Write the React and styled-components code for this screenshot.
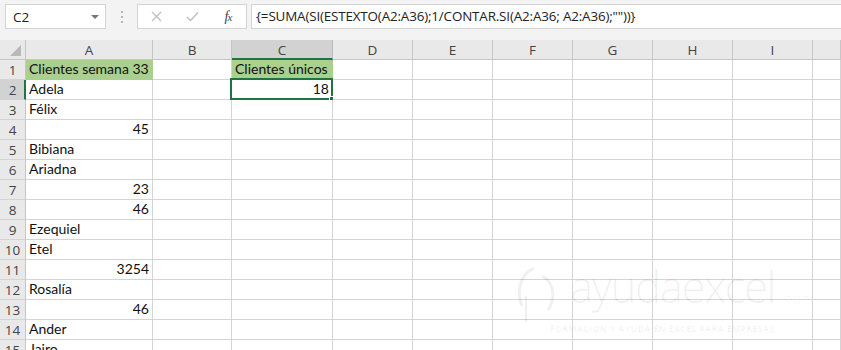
import React from "react";
import styled, { createGlobalStyle } from "styled-components";

const GlobalStyle = createGlobalStyle`
  html, body {
    margin: 0;
    padding: 0;
    background: #ffffff;
    overflow: hidden;
  }
  * {
    box-sizing: border-box;
  }
`;

const Wrapper = styled.div`
  position: relative;
  width: 841px;
  height: 350px;
  overflow: hidden;
  background: #ffffff;
`;

const TopBar = styled.div`
  display: flex;
  align-items: flex-start;
  height: 40px;
  padding: 4px 0 0 5px;
  background: #f3f3f3;
  font-family: "Open Sans", "Noto Sans", sans-serif;
`;

const NameBox = styled.div`
  display: flex;
  align-items: center;
  justify-content: space-between;
  width: 101px;
  height: 25px;
  padding: 0 6px 0 7px;
  background: #ffffff;
  border: 1px solid #d4d4d4;
  font-size: 13.5px;
  color: #222;
`;

const Caret = styled.span`
  width: 0;
  height: 0;
  border-left: 4px solid transparent;
  border-right: 4px solid transparent;
  border-top: 4px solid #777;
`;

const Dots = styled.div`
  display: flex;
  flex-direction: column;
  justify-content: center;
  gap: 3px;
  width: 31px;
  height: 25px;
  padding-left: 15px;
  span {
    width: 2px;
    height: 2px;
    background: #b5b5b5;
  }
`;

const ButtonsBox = styled.div`
  display: flex;
  align-items: center;
  width: 110px;
  height: 25px;
  background: #ffffff;
  border: 1px solid #d4d4d4;
`;

const IconButton = styled.div`
  display: flex;
  align-items: center;
  justify-content: center;
  width: ${(p) => p.$w}px;
  height: 100%;
  color: #bdbdbd;
`;

const Fx = styled.span`
  font-family: "Liberation Serif", serif;
  font-style: italic;
  font-size: 14px;
  color: #444;
  letter-spacing: -1px;
  sub {
    font-size: 11px;
    vertical-align: baseline;
  }
`;

const FormulaBox = styled.div`
  flex: 1;
  height: 25px;
  margin-left: 4px;
  padding: 2px 0 0 4px;
  background: #ffffff;
  border: 1px solid #d4d4d4;
  border-right: none;
  font-size: 13.4px;
  color: #222;
  white-space: nowrap;
  letter-spacing: -0.15px;
`;

const Sheet = styled.div`
  display: grid;
  grid-template-columns: 26px 127px 79px 101px repeat(6, 80px) 1fr;
  grid-auto-rows: 20px;
  font-family: "Lato", "Open Sans", sans-serif;
  font-size: 14px;
  color: #111;
`;

const Corner = styled.div`
  position: relative;
  background: #e9e9e9;
  border-right: 1px solid #c6c6c6;
  border-bottom: 1px solid #c6c6c6;
`;

const ColHead = styled.div`
  display: flex;
  align-items: center;
  justify-content: center;
  background: ${(p) => (p.$active ? "#d2d2d2" : "#e9e9e9")};
  border-right: 1px solid ${(p) => (p.$active ? "#b9b9b9" : "#c6c6c6")};
  border-bottom: ${(p) => (p.$active ? "2px solid #217346" : "1px solid #c6c6c6")};
  color: #444;
  font-family: "Open Sans", sans-serif;
  font-size: 13.5px;
  padding-top: ${(p) => (p.$active ? "1px" : "0")};
`;

const RowHead = styled.div`
  display: flex;
  align-items: center;
  justify-content: center;
  background: ${(p) => (p.$active ? "#d2d2d2" : "#e9e9e9")};
  border-right: ${(p) => (p.$active ? "2px solid #217346" : "1px solid #c6c6c6")};
  border-bottom: 1px solid #d4d4d4;
  color: #444;
  font-family: "Open Sans", sans-serif;
  font-size: 13.5px;
  padding-left: ${(p) => (p.$active ? "1px" : "0")};
`;

const Cell = styled.div`
  position: relative;
  display: flex;
  align-items: flex-end;
  justify-content: ${(p) => (p.$num ? "flex-end" : "flex-start")};
  padding: 0 3px 1px 3px;
  background: ${(p) => p.$fill || "#ffffff"};
  border-right: 1px solid ${(p) => p.$fill || "#d4d4d4"};
  border-bottom: 1px solid ${(p) => p.$fill || "#d4d4d4"};
  white-space: nowrap;
  line-height: 18px;
`;

const Selection = styled.div`
  position: absolute;
  left: -2px;
  top: -2px;
  right: -1px;
  bottom: -1px;
  border: 2px solid #217346;
  pointer-events: none;
`;

const FillHandle = styled.div`
  position: absolute;
  right: -4px;
  bottom: -4px;
  width: 6px;
  height: 6px;
  background: #217346;
  border: 1px solid #ffffff;
`;

const Watermark = styled.div`
  position: absolute;
  left: 512px;
  top: 262px;
  display: flex;
  align-items: flex-start;
  gap: 8px;
  pointer-events: none;
  color: rgba(0, 0, 0, 0.06);
  font-family: "Open Sans", sans-serif;
`;

const MarkText = styled.div`
  display: flex;
  flex-direction: column;
  padding-top: 2px;
`;

const MarkName = styled.div`
  font-size: 44px;
  font-weight: 300;
  line-height: 44px;
  letter-spacing: -1.5px;
  span {
    font-size: 13px;
    letter-spacing: 0;
    margin-left: 6px;
  }
`;

const MarkTag = styled.div`
  margin-top: 3px;
  margin-left: -20px;
  font-size: 8.5px;
  font-weight: 700;
  letter-spacing: 0.5px;
  text-transform: uppercase;
`;

const columns = ["A", "B", "C", "D", "E", "F", "G", "H", "I", ""];
const GREEN = "#a9d08e";

const colA = [
  { v: "Clientes semana 33", fill: GREEN },
  { v: "Adela" },
  { v: "Félix" },
  { v: "45", num: true },
  { v: "Bibiana" },
  { v: "Ariadna" },
  { v: "23", num: true },
  { v: "46", num: true },
  { v: "Ezequiel" },
  { v: "Etel" },
  { v: "3254", num: true },
  { v: "Rosalía" },
  { v: "46", num: true },
  { v: "Ander" },
  { v: "Jairo" },
];

const colC = {
  1: { v: "Clientes únicos", fill: GREEN },
  2: { v: "18", num: true, selected: true },
};

const App = () => {
  return (
    <Wrapper>
      <GlobalStyle />
      <TopBar>
        <NameBox>
          <span>C2</span>
          <Caret />
        </NameBox>
        <Dots>
          <span />
          <span />
          <span />
        </Dots>
        <ButtonsBox>
          <IconButton $w={36}>
            <svg width="11" height="11" viewBox="0 0 11 11">
              <path d="M1 1 L10 10 M10 1 L1 10" stroke="#bdbdbd" strokeWidth="1.3" fill="none" />
            </svg>
          </IconButton>
          <IconButton $w={36}>
            <svg width="13" height="11" viewBox="0 0 13 11">
              <path d="M1 6 L4.5 9.5 L12 1.5" stroke="#bdbdbd" strokeWidth="1.4" fill="none" />
            </svg>
          </IconButton>
          <IconButton $w={36}>
            <Fx>
              f<sub>x</sub>
            </Fx>
          </IconButton>
        </ButtonsBox>
        <FormulaBox>{'{=SUMA(SI(ESTEXTO(A2:A36);1/CONTAR.SI(A2:A36; A2:A36);""))}'}</FormulaBox>
      </TopBar>
      <Sheet>
        <Corner>
          <svg width="26" height="20" viewBox="0 0 26 20" style={{ position: "absolute", left: 0, top: 0 }}>
            <polygon points="21,5 21,16 10,16" fill="#b8b8b8" />
          </svg>
        </Corner>
        {columns.map((c, i) => (
          <ColHead key={`h${i}`} $active={c === "C"}>
            {c}
          </ColHead>
        ))}
        {colA.map((a, r) => {
          const row = r + 1;
          const c = colC[row];
          return (
            <React.Fragment key={`r${row}`}>
              <RowHead $active={row === 2}>{row}</RowHead>
              <Cell $fill={a.fill} $num={a.num}>
                {a.v}
              </Cell>
              <Cell />
              <Cell $fill={c && c.fill} $num={c && c.num}>
                {c && c.v}
                {c && c.selected && (
                  <Selection>
                    <FillHandle />
                  </Selection>
                )}
              </Cell>
              {[0, 1, 2, 3, 4, 5, 6].map((k) => (
                <Cell key={k} />
              ))}
            </React.Fragment>
          );
        })}
      </Sheet>
      <Watermark>
        <svg width="50" height="66" viewBox="0 0 50 66">
          <path d="M22 6 C8 12 4 30 10 44" stroke="rgba(0,0,0,0.06)" strokeWidth="3" fill="none" />
          <path d="M30 14 C42 20 44 36 36 48" stroke="rgba(0,0,0,0.06)" strokeWidth="3" fill="none" />
          <path d="M14 34 L14 60" stroke="rgba(0,0,0,0.06)" strokeWidth="2" fill="none" />
        </svg>
        <MarkText>
          <MarkName>
            ayudaexcel<span>.com</span>
          </MarkName>
          <MarkTag>Formación y ayuda en Excel para empresas</MarkTag>
        </MarkText>
      </Watermark>
    </Wrapper>
  );
};

export default App;
